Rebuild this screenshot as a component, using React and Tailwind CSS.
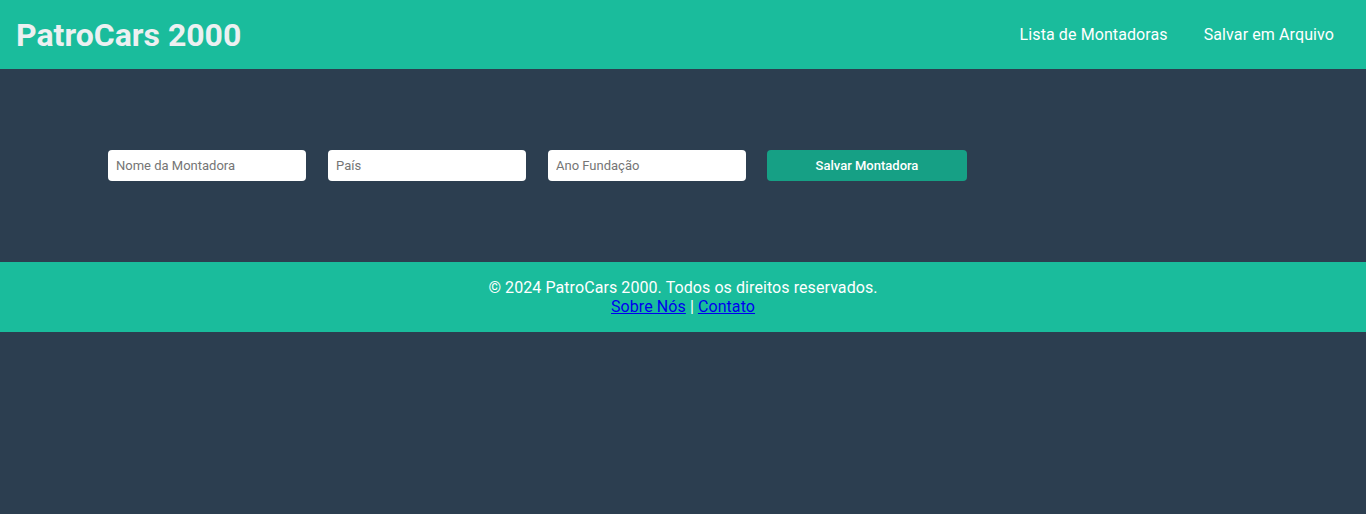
import React from 'react';

export default function App() {
    return (
        <div className="min-h-[514px] bg-[#2c3e50] font-['Roboto','Liberation_Sans',sans-serif]">
            <header className="h-[69px] bg-[#1abc9c] flex items-center justify-between px-4">
                <h1 className="text-[32px] font-bold text-[#ecf0f1] leading-none">PatroCars 2000</h1>
                <nav className="flex gap-9 pr-4 text-white text-[16px] tracking-[0.1px]">
                    <a href="#">Lista de Montadoras</a>
                    <a href="#">Salvar em Arquivo</a>
                </nav>
            </header>

            <main className="pt-[81px] pb-[81px] pl-[108px]">
                <form className="flex gap-[22px]" onSubmit={e => e.preventDefault()}>
                    <input className="w-[198px] h-[31px] bg-white rounded px-2 text-[13px] placeholder-[#757575] outline-none" placeholder="Nome da Montadora" />
                    <input className="w-[198px] h-[31px] bg-white rounded px-2 text-[13px] placeholder-[#757575] outline-none" placeholder="País" />
                    <input className="w-[198px] h-[31px] bg-white rounded px-2 text-[13px] placeholder-[#757575] outline-none" placeholder="Ano Fundação" />
                    <button type="submit" className="w-[200px] h-[31px] bg-[#16a085] rounded text-white text-[13px] font-medium -ml-px">
                        Salvar Montadora
                    </button>
                </form>
            </main>

            <footer className="bg-[#1abc9c] text-center text-white text-[16px] tracking-[0.08px] leading-[19px] py-4">
                <p>© 2024 PatroCars 2000. Todos os direitos reservados.</p>
                <p>
                    <a href="#" className="text-[#0000ee] underline">Sobre Nós</a> | <a href="#" className="text-[#0000ee] underline">Contato</a>
                </p>
            </footer>
        </div>
    );
}
